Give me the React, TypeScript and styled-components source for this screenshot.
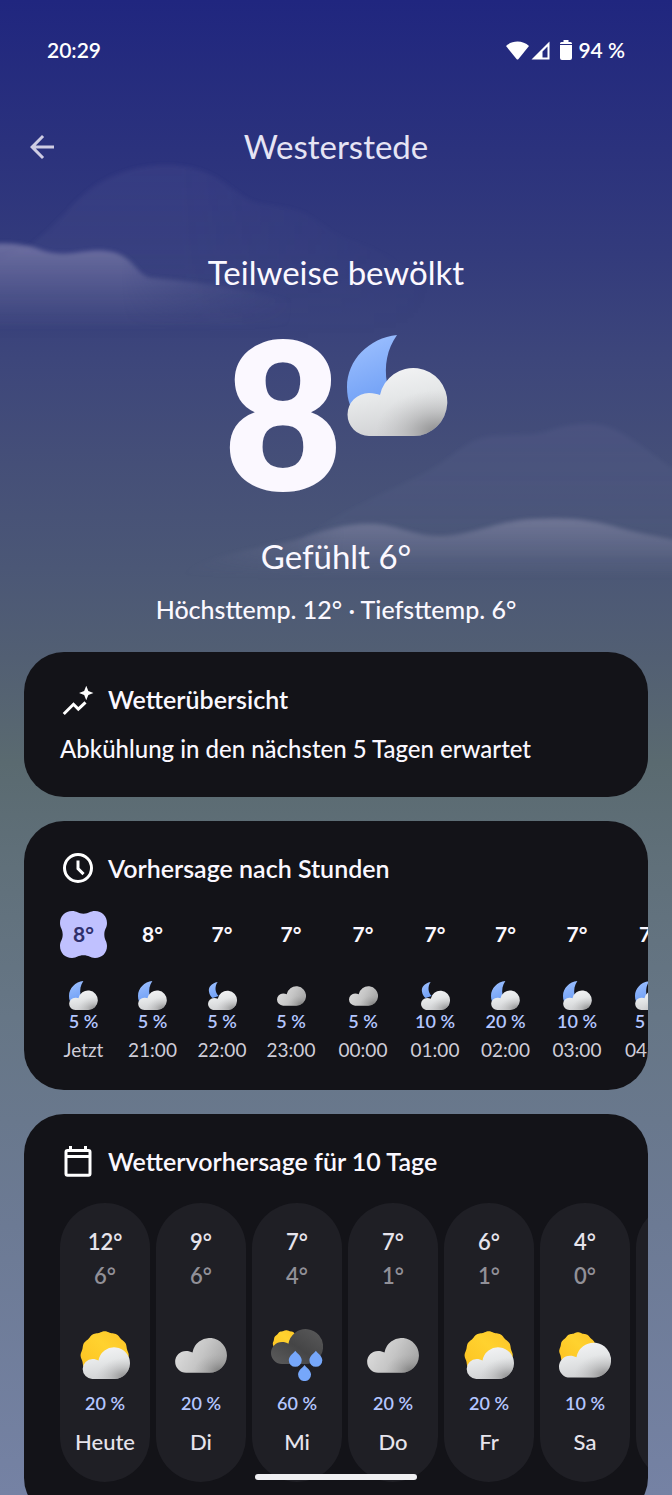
import React from "react";
import styled, { createGlobalStyle } from "styled-components";

const GlobalStyle = createGlobalStyle`
  *, *::before, *::after { box-sizing: border-box; }
  body {
    margin: 0;
    background: #20267f;
    font-family: Lato, "Liberation Sans", sans-serif;
    color: #fbf8ff;
  }
  h1, h2, p, ul { margin: 0; padding: 0; font-weight: 400; }
  ul { list-style: none; }
`;

const Screen = styled.div`
  position: relative;
  height: 100vh;
  overflow: hidden;
  background: linear-gradient(
    180deg,
    #20267f 0%,
    #2b327d 10%,
    #333b7c 17%,
    #3d467b 24%,
    #454f78 31%,
    #4b5776 38%,
    #525f73 44%,
    #5a6a70 51%,
    #60707a 58%,
    #667686 68%,
    #6c7a94 82%,
    #7582a4 100%
  );
`;

const Sky = styled.svg`
  position: absolute;
  top: 0;
  left: 0;
  width: 100%;
  height: auto;
`;

const Content = styled.div`
  position: relative;
  display: flex;
  flex-direction: column;
`;

const StatusBar = styled.div`
  display: flex;
  justify-content: space-between;
  align-items: center;
  margin-top: 36px;
  padding: 0 47px;
  height: 28px;
  font-size: 21px;
  font-weight: 600;
  line-height: 28px;
  color: #ffffff;
`;

const StatusIcons = styled.div`
  display: flex;
  align-items: center;
  gap: 2px;
`;

const BatteryGlyph = styled.svg`
  margin: 0 4px 0 8px;
`;

const AppBar = styled.header`
  display: grid;
  grid-template-columns: 48px 1fr 48px;
  align-items: center;
  margin-top: 60px;
  padding: 0 18px;
`;

const BackButton = styled.button`
  display: flex;
  align-items: center;
  justify-content: center;
  width: 48px;
  height: 44px;
  padding: 2px 0 0;
  border: 0;
  background: none;
  color: #cfcde4;
`;

const City = styled.h1`
  font-size: 33px;
  line-height: 44px;
  text-align: center;
  color: #e6e4f4;
`;

const Hero = styled.section`
  display: flex;
  flex-direction: column;
  align-items: center;
  margin-top: 82px;
`;

const HeroText = styled.p`
  font-size: 33px;
  line-height: 44px;
`;

const Now = styled.div`
  display: flex;
  gap: 5px;
  margin: 27px 0 33px;
`;

const NowTemp = styled.span`
  font-size: 204px;
  font-weight: 800;
  line-height: 180px;
`;

const NowIcon = styled.div`
  padding-top: 14px;
`;

const Range = styled.p`
  margin-top: 15px;
  font-size: 25px;
  font-weight: 500;
  line-height: 32px;
`;

const Cards = styled.main`
  display: flex;
  flex-direction: column;
  gap: 24px;
  margin-top: 27px;
  padding: 0 24px;
`;

const Card = styled.section`
  overflow: hidden;
  padding: 31px 0 28px 36px;
  border-radius: 40px;
  background: #131318;
`;

const CardHead = styled.div`
  display: flex;
  align-items: center;
  gap: 12px;
  height: 32px;
`;

const CardTitle = styled.h2`
  font-size: 25px;
  font-weight: 600;
  line-height: 32px;
  white-space: nowrap;
`;

const Summary = styled.p`
  margin: 18px 36px 4px 0;
  font-size: 24px;
  font-weight: 500;
  line-height: 32px;
`;

const Hours = styled.ul`
  display: flex;
  gap: 20px;
  margin-top: 27px;
`;

const Hour = styled.li<{ $width: number }>`
  display: flex;
  flex: none;
  flex-direction: column;
  align-items: center;
  width: ${(p) => p.$width}px;
`;

const HourTemp = styled.div<{ $current: boolean }>`
  position: relative;
  z-index: 0;
  width: 47px;
  height: 47px;
  font-size: 21px;
  font-weight: 700;
  line-height: 46px;
  text-align: center;
  color: ${(p) => (p.$current ? "#2e2f6b" : "#fbf8ff")};
`;

const Badge = styled.svg`
  position: absolute;
  inset: 0;
  z-index: -1;
`;

const IconSlot = styled.div<{ $size: number; $top: number }>`
  display: flex;
  align-items: center;
  justify-content: center;
  height: ${(p) => p.$size}px;
  margin-top: ${(p) => p.$top}px;
`;

const Chance = styled.span<{ $top: number }>`
  margin-top: ${(p) => p.$top}px;
  font-size: 18px;
  font-weight: 600;
  line-height: 20px;
  white-space: nowrap;
  color: #b4c6ff;
`;

const HourLabel = styled.span`
  margin-top: 7px;
  font-size: 19px;
  line-height: 24px;
  color: #cfcdd8;
`;

const Days = styled.ul`
  display: flex;
  gap: 6px;
  margin: 26px 0 8px;
`;

const Day = styled.li`
  display: flex;
  flex: none;
  flex-direction: column;
  align-items: center;
  width: 90px;
  padding: 25px 0 26px;
  border-radius: 45px;
  background: #1f1f25;
  font-size: 22px;
  font-weight: 600;
  line-height: 28px;
  color: #e6e4ec;
`;

const Low = styled.span`
  margin-top: 6px;
  color: #919098;
`;

const DayName = styled.span`
  margin-top: 15px;
  font-weight: 500;
`;

const HomeHandle = styled.div`
  position: absolute;
  bottom: 15px;
  left: 50%;
  width: 162px;
  height: 6px;
  border-radius: 3px;
  background: #efeff2;
  transform: translateX(-50%);
`;

type Kind = "moonCloud" | "smallMoonCloud" | "cloud" | "sunCloud" | "smallSunCloud" | "rain";

const CLOUD = "M33 105A33 33 0 0 1 33 39C41 39 47 41 52.5 44A52.5 52.5 0 1 1 104 105Z";
const NIGHT_CLOUD = "M22 101A21.5 21.5 0 0 1 22 58C27 58 30 59 33 60A34 34 0 1 1 67 101Z";

/* A disc with twelve soft lobes. */
function sunPath(cx: number, cy: number, r: number) {
  const steps = 144;
  const points: string[] = [];
  for (let i = 0; i < steps; i++) {
    const a = (i / steps) * Math.PI * 2;
    const radius = r * (0.97 + 0.02 * Math.cos(12 * a));
    points.push(`${(cx + radius * Math.sin(a)).toFixed(1)} ${(cy - radius * Math.cos(a)).toFixed(1)}`);
  }
  return `M${points.join("L")}Z`;
}

function CloudShape({ tone, transform }: { tone: "light" | "grey"; transform?: string }) {
  return (
    <g transform={transform}>
      <path d={CLOUD} fill={`url(#${tone})`} />
      <path d={CLOUD} fill={`url(#${tone}Shade)`} />
    </g>
  );
}

function WeatherIcon({ kind, width }: { kind: Kind; width: number }) {
  switch (kind) {
    case "moonCloud":
      return (
        <svg width={width} height={width} viewBox="0 0 101 101" role="img" aria-label="Teilweise bewölkt">
          <path d="M50 0C22 3 0 25 0 52C0 59 1 65 3 70L40 66C42 60 41 54 40 48C37 31 40 14 50 0Z" fill="url(#moon)" />
          <path d={NIGHT_CLOUD} fill="url(#light)" />
          <path d={NIGHT_CLOUD} fill="url(#lightShade)" />
        </svg>
      );
    case "smallMoonCloud":
      return (
        <svg width={width} height={width - 1} viewBox="0 0 87 84" role="img" aria-label="Überwiegend bewölkt">
          <path d="M29 0C10 4 0 16 3 29C4 38 9 44 14 48L32 42C20 31 20 12 29 0Z" fill="url(#moon)" />
          <CloudShape tone="light" transform="translate(0 26) scale(.555)" />
        </svg>
      );
    case "cloud":
      return (
        <svg width={width} height={Math.round(width * 0.68)} viewBox="0 0 156.5 106" role="img" aria-label="Bewölkt">
          <CloudShape tone="grey" />
        </svg>
      );
    case "sunCloud":
      return (
        <svg width={width} height={width - 2} viewBox="0 0 150 144" role="img" aria-label="Teils sonnig">
          <path d={sunPath(74, 73, 73)} fill="url(#sun)" />
          <CloudShape tone="light" transform="translate(8 49) scale(.905)" />
        </svg>
      );
    case "smallSunCloud":
      return (
        <svg width={width} height={width - 6} viewBox="0 0 156.5 138" role="img" aria-label="Überwiegend bewölkt">
          <path d={sunPath(57, 57, 57)} fill="url(#sun)" />
          <CloudShape tone="light" transform="translate(0 32)" />
        </svg>
      );
    case "rain":
      return (
        <svg width={width} height={width} viewBox="0 0 156.5 156" role="img" aria-label="Schauer">
          <path d={sunPath(46, 44, 41)} fill="url(#sun)" />
          <path d={CLOUD} fill="url(#storm)" />
          {[
            [73, 65],
            [135, 65],
            [101, 108],
          ].map(([x, y]) => (
            <path
              key={x}
              d="M0 0C3 6 19.5 15 19.5 29A19.5 19.5 0 0 1 -19.5 29C-19.5 15 -3 6 0 0Z"
              transform={`translate(${x} ${y})`}
              fill="#76a7fa"
            />
          ))}
        </svg>
      );
  }
}

const hours: { time: string; temp: string; chance: string; kind: Kind; width: number }[] = [
  { time: "Jetzt", temp: "8°", chance: "5 %", kind: "moonCloud", width: 47 },
  { time: "21:00", temp: "8°", chance: "5 %", kind: "moonCloud", width: 51 },
  { time: "22:00", temp: "7°", chance: "5 %", kind: "smallMoonCloud", width: 48 },
  { time: "23:00", temp: "7°", chance: "5 %", kind: "cloud", width: 50 },
  { time: "00:00", temp: "7°", chance: "5 %", kind: "cloud", width: 54 },
  { time: "01:00", temp: "7°", chance: "10 %", kind: "smallMoonCloud", width: 50 },
  { time: "02:00", temp: "7°", chance: "20 %", kind: "moonCloud", width: 51 },
  { time: "03:00", temp: "7°", chance: "10 %", kind: "moonCloud", width: 52 },
  { time: "04:00", temp: "7°", chance: "5 %", kind: "moonCloud", width: 53 },
];

const days: { name: string; high: string; low: string; chance: string; kind: Kind; icon: number }[] = [
  { name: "Heute", high: "12°", low: "6°", chance: "20 %", kind: "sunCloud", icon: 50 },
  { name: "Di", high: "9°", low: "6°", chance: "20 %", kind: "cloud", icon: 52 },
  { name: "Mi", high: "7°", low: "4°", chance: "60 %", kind: "rain", icon: 52 },
  { name: "Do", high: "7°", low: "1°", chance: "20 %", kind: "cloud", icon: 52 },
  { name: "Fr", high: "6°", low: "1°", chance: "20 %", kind: "sunCloud", icon: 50 },
  { name: "Sa", high: "4°", low: "0°", chance: "10 %", kind: "smallSunCloud", icon: 52 },
];

function SkyBackdrop() {
  return (
    <Sky viewBox="0 0 672 620" aria-hidden="true">
      <defs>
        <linearGradient id="moon" x1="0.3" y1="0" x2="0.6" y2="1">
          <stop offset="0" stopColor="#9dc0ff" />
          <stop offset="1" stopColor="#6f9ff5" />
        </linearGradient>
        <linearGradient id="sun" x1="0" y1="1" x2="1" y2="0">
          <stop offset="0" stopColor="#fdbf1e" />
          <stop offset="0.6" stopColor="#ffd22f" />
          <stop offset="1" stopColor="#fdc326" />
        </linearGradient>
        <linearGradient id="light" x1="0" y1="0" x2="0.3" y2="1">
          <stop offset="0" stopColor="#f6f6f8" />
          <stop offset="0.5" stopColor="#e6e8e9" />
          <stop offset="1" stopColor="#d2d3d5" />
        </linearGradient>
        <radialGradient id="lightShade" cx="0.9" cy="0.95" r="0.62">
          <stop offset="0" stopColor="#6c6c6c" stopOpacity="0.7" />
          <stop offset="0.5" stopColor="#8a8a8a" stopOpacity="0.3" />
          <stop offset="1" stopColor="#b0b0b0" stopOpacity="0" />
        </radialGradient>
        <linearGradient id="grey" x1="0" y1="0.3" x2="1" y2="0.7">
          <stop offset="0" stopColor="#dedede" />
          <stop offset="0.5" stopColor="#c6c6c6" />
          <stop offset="1" stopColor="#a2a2a2" />
        </linearGradient>
        <radialGradient id="greyShade" cx="0.86" cy="0.95" r="0.5">
          <stop offset="0" stopColor="#5c5c5c" stopOpacity="0.55" />
          <stop offset="0.5" stopColor="#808080" stopOpacity="0.25" />
          <stop offset="1" stopColor="#a0a0a0" stopOpacity="0" />
        </radialGradient>
        <linearGradient id="storm" x1="0" y1="1" x2="0.9" y2="0.1">
          <stop offset="0" stopColor="#5c5c5d" />
          <stop offset="0.55" stopColor="#454546" />
          <stop offset="1" stopColor="#565657" />
        </linearGradient>
        <linearGradient id="hazeBack" x1="0" y1="0" x2="0" y2="1">
          <stop offset="0" stopColor="#8e86b8" stopOpacity="0.1" />
          <stop offset="0.5" stopColor="#8088b0" stopOpacity="0.07" />
          <stop offset="1" stopColor="#8088b0" stopOpacity="0" />
        </linearGradient>
        <linearGradient id="hazeFront" x1="0" y1="0" x2="0" y2="1">
          <stop offset="0" stopColor="#a09dc0" stopOpacity="0.52" />
          <stop offset="0.45" stopColor="#9492b8" stopOpacity="0.3" />
          <stop offset="1" stopColor="#8a88b0" stopOpacity="0" />
        </linearGradient>
        <linearGradient id="hazeLow" x1="0" y1="0" x2="0" y2="1">
          <stop offset="0" stopColor="#aeabc4" stopOpacity="0.38" />
          <stop offset="0.45" stopColor="#a3a1bd" stopOpacity="0.22" />
          <stop offset="1" stopColor="#9896b4" stopOpacity="0" />
        </linearGradient>
        <linearGradient id="fadeRight" x1="0" y1="0" x2="1" y2="0">
          <stop offset="0" stopColor="#fff" />
          <stop offset="0.4" stopColor="#fff" />
          <stop offset="1" stopColor="#000" />
        </linearGradient>
        <linearGradient id="fadeLeft" x1="0" y1="0" x2="1" y2="0">
          <stop offset="0" stopColor="#000" />
          <stop offset="0.35" stopColor="#fff" />
          <stop offset="1" stopColor="#fff" />
        </linearGradient>
        <mask id="maskLeftCloud" maskUnits="userSpaceOnUse" x="0" y="200" width="300" height="160">
          <rect x="0" y="200" width="300" height="160" fill="url(#fadeRight)" />
        </mask>
        <mask id="maskLeftHill" maskUnits="userSpaceOnUse" x="0" y="140" width="440" height="220">
          <rect x="0" y="140" width="440" height="220" fill="url(#fadeRight)" />
        </mask>
        <mask id="maskRightCloud" maskUnits="userSpaceOnUse" x="170" y="490" width="502" height="120">
          <rect x="170" y="490" width="502" height="120" fill="url(#fadeLeft)" />
        </mask>
        <filter id="soft" x="-10%" y="-10%" width="120%" height="120%">
          <feGaussianBlur stdDeviation="2" />
        </filter>
      </defs>
      <g mask="url(#maskLeftHill)">
        <path
          filter="url(#soft)"
          fill="url(#hazeBack)"
          d="M30 245C60 225 75 195 105 180C135 164 175 160 205 172C230 182 240 200 262 204C290 208 305 210 325 226C345 242 370 244 392 258C410 270 440 285 470 300V340H-10V262Z"
        />
      </g>
      <g mask="url(#maskLeftCloud)">
        <path
          filter="url(#soft)"
          fill="url(#hazeFront)"
          d="M-20 246C0 242 20 243 36 248C50 254 62 255 80 252C100 249 115 250 126 258C138 267 140 276 152 278C180 280 220 284 290 300V330H-20Z"
        />
      </g>
      <path
        filter="url(#soft)"
        fill="url(#hazeBack)"
        d="M300 540C350 505 395 490 430 470C455 456 465 440 490 436C515 434 535 436 550 430C575 422 600 420 620 432C645 446 655 458 690 480V570H300Z"
      />
      <g mask="url(#maskRightCloud)">
        <path
          filter="url(#soft)"
          fill="url(#hazeLow)"
          d="M180 574C215 552 260 549 295 540C330 528 355 521 385 525C410 530 420 537 445 536C475 534 500 520 535 519C570 517 595 520 620 528C645 535 660 536 690 544V578H180Z"
        />
      </g>
    </Sky>
  );
}

export default function App() {
  return (
    <>
      <GlobalStyle />
      <Screen>
        <SkyBackdrop />
        <Content>
          <StatusBar>
            <span>20:29</span>
            <StatusIcons>
              <svg width="23" height="19" viewBox="0 0 23 19" aria-hidden="true">
                <path d="M0 5C6 -1 17 -1 23 5L12.5 18Q11.5 19 10.5 18Z" fill="#fff" />
              </svg>
              <svg width="19" height="19" viewBox="0 0 19 19" aria-hidden="true">
                <path fillRule="evenodd" d="M18.5 0.5V18.5H0.5ZM16.5 5.500L11.5 10.5V16.5H16.5Z" fill="#fff" />
              </svg>
              <BatteryGlyph width="12" height="20" viewBox="0 0 12 20" aria-hidden="true">
                <path d="M3.5 0H8.5V2H10.5Q12 2 12 3.5V4H0V3.5Q0 2 1.5 2H3.5ZM0 5H12V18Q12 20 10 20H2Q0 20 0 18Z" fill="#fff" />
              </BatteryGlyph>
              <span>94 %</span>
            </StatusIcons>
          </StatusBar>

          <AppBar>
            <BackButton type="button" aria-label="Zurück">
              <svg width="36" height="36" viewBox="0 0 24 24" aria-hidden="true">
                <path fill="currentColor" d="M20 11H7.83l5.59-5.59L12 4l-8 8 8 8 1.41-1.41L7.83 13H20v-2z" />
              </svg>
            </BackButton>
            <City>Westerstede</City>
          </AppBar>

          <Hero>
            <HeroText>Teilweise bewölkt</HeroText>
            <Now>
              <NowTemp>8</NowTemp>
              <NowIcon>
                <WeatherIcon kind="moonCloud" width={101} />
              </NowIcon>
            </Now>
            <HeroText>Gefühlt 6°</HeroText>
            <Range>Höchsttemp. 12° · Tiefsttemp. 6°</Range>
          </Hero>

          <Cards>
            <Card>
              <CardHead>
                <svg width="36" height="36" viewBox="0 0 24 24" aria-hidden="true">
                  <path d="M2.5 22L9 15.5L12.2 18.7L17 14.2" fill="none" stroke="#fff" strokeWidth="2" />
                  <path d="M17.5 3.2L18.9 6.6L22.3 8L18.9 9.4L17.5 12.8L16.1 9.4L12.7 8L16.1 6.6Z" fill="#fff" />
                </svg>
                <CardTitle>Wetterübersicht</CardTitle>
              </CardHead>
              <Summary>Abkühlung in den nächsten 5 Tagen erwartet</Summary>
            </Card>

            <Card>
              <CardHead>
                <svg width="36" height="36" viewBox="0 0 24 24" fill="none" stroke="#fff" strokeWidth="2" aria-hidden="true">
                  <circle cx="12" cy="12" r="9" />
                  <path d="M12 7V12.4L15.7 16.1" />
                </svg>
                <CardTitle>Vorhersage nach Stunden</CardTitle>
              </CardHead>
              <Hours>
                {hours.map((h, i) => (
                  <Hour key={h.time} $width={h.width}>
                    <HourTemp $current={i === 0}>
                      {i === 0 && (
                        <Badge width="47" height="47" viewBox="0 0 47 47" aria-hidden="true">
                          <path
                            fill="#c0c1ff"
                            d="M12 0C17 0 18 2.7 23.5 2.7C29 2.7 30 0 35 0C42 0 47 5 47 12C47 17 44.3 18 44.3 23.5C44.3 29 47 30 47 35C47 42 42 47 35 47C30 47 29 44.3 23.5 44.3C18 44.3 17 47 12 47C5 47 0 42 0 35C0 30 2.7 29 2.7 23.5C2.7 18 0 17 0 12C0 5 5 0 12 0Z"
                          />
                        </Badge>
                      )}
                      {h.temp}
                    </HourTemp>
                    <IconSlot $size={29} $top={23}>
                      <WeatherIcon kind={h.kind} width={29} />
                    </IconSlot>
                    <Chance $top={1}>{h.chance}</Chance>
                    <HourLabel>{h.time}</HourLabel>
                  </Hour>
                ))}
              </Hours>
            </Card>

            <Card>
              <CardHead>
                <svg width="36" height="36" viewBox="0 0 24 24" fill="none" stroke="#fff" strokeWidth="2" aria-hidden="true">
                  <rect x="4" y="5" width="16" height="16.5" rx="1" />
                  <path d="M7 2V5M17 2V5M4 9H20" />
                </svg>
                <CardTitle>Wettervorhersage für 10 Tage</CardTitle>
              </CardHead>
              <Days>
                {days.map((d) => (
                  <Day key={d.name}>
                    <span>{d.high}</span>
                    <Low>{d.low}</Low>
                    <IconSlot $size={52} $top={39}>
                      <WeatherIcon kind={d.kind} width={d.icon} />
                    </IconSlot>
                    <Chance $top={12}>{d.chance}</Chance>
                    <DayName>{d.name}</DayName>
                  </Day>
                ))}
                <Day aria-hidden="true" />
              </Days>
            </Card>
          </Cards>
        </Content>
        <HomeHandle />
      </Screen>
    </>
  );
}
